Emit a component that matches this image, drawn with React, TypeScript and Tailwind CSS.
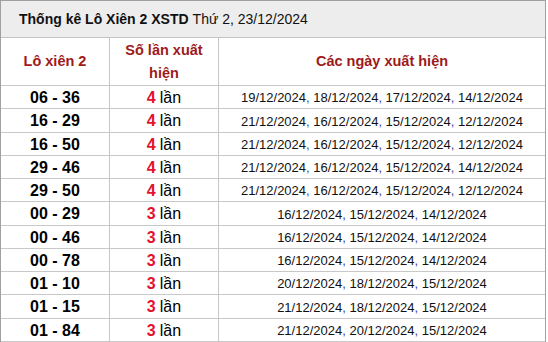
import React from "react";

const rows: [string, number, string[]][] = [
  ["06 - 36", 4, ["19/12/2024", "18/12/2024", "17/12/2024", "14/12/2024"]],
  ["16 - 29", 4, ["21/12/2024", "16/12/2024", "15/12/2024", "12/12/2024"]],
  ["16 - 50", 4, ["21/12/2024", "16/12/2024", "15/12/2024", "12/12/2024"]],
  ["29 - 46", 4, ["21/12/2024", "16/12/2024", "15/12/2024", "14/12/2024"]],
  ["29 - 50", 4, ["21/12/2024", "16/12/2024", "15/12/2024", "12/12/2024"]],
  ["00 - 29", 3, ["16/12/2024", "15/12/2024", "14/12/2024"]],
  ["00 - 46", 3, ["16/12/2024", "15/12/2024", "14/12/2024"]],
  ["00 - 78", 3, ["16/12/2024", "15/12/2024", "14/12/2024"]],
  ["01 - 10", 3, ["20/12/2024", "18/12/2024", "15/12/2024"]],
  ["01 - 15", 3, ["21/12/2024", "18/12/2024", "15/12/2024"]],
  ["01 - 84", 3, ["21/12/2024", "20/12/2024", "15/12/2024"]],
];

export default function App() {
  return (
    <div className="w-[548px] h-[342px] overflow-hidden bg-white font-['Liberation_Sans',Arial,sans-serif] text-black">
      <div className="w-[546px] border-l border-r border-t border-[#a0a0a0]">
        <div className="h-[36px] box-content border-b border-[#c4c4c4] bg-[#eeeded] flex items-center pl-[18px] text-[14px] text-[#111]">
          <span className="font-bold">Thống kê Lô Xiên 2 XSTD</span>
          <span className="ml-[4px]">Thứ 2, 23/12/2024</span>
        </div>
        <div className="grid grid-cols-[108px_109px_1fr] h-[48px] border-b border-[#c8c8c8] text-[14.5px] font-bold text-[#9e1a1a]">
          <div className="flex items-center justify-center">Lô xiên 2</div>
          <div className="flex items-center justify-center text-center leading-[23px] border-l border-[#c8c8c8] px-2">
            Số lần xuất hiện
          </div>
          <div className="flex items-center justify-center border-l border-[#c8c8c8]">Các ngày xuất hiện</div>
        </div>
        {rows.map(([pair, n, dates]) => (
          <div
            key={pair}
            className="grid grid-cols-[108px_109px_1fr] h-[23.27px] border-b border-[#c8c8c8]"
          >
            <div className="flex items-center justify-center text-[16px] font-bold">{pair}</div>
            <div className="flex items-center justify-center text-[16px] border-l border-[#c8c8c8]">
              <span className="font-bold text-[#e3122f]">{n}</span>
              <span className="ml-[4px]">lần</span>
            </div>
            <div className="flex items-center justify-center text-[13px] border-l border-[#c8c8c8] text-[#111]">
              {dates.map((d, i) => (
                <React.Fragment key={i}>
                  {i > 0 && <span className="text-[#3b4a9e] whitespace-pre">, </span>}
                  <span>{d}</span>
                </React.Fragment>
              ))}
            </div>
          </div>
        ))}
      </div>
    </div>
  );
}
